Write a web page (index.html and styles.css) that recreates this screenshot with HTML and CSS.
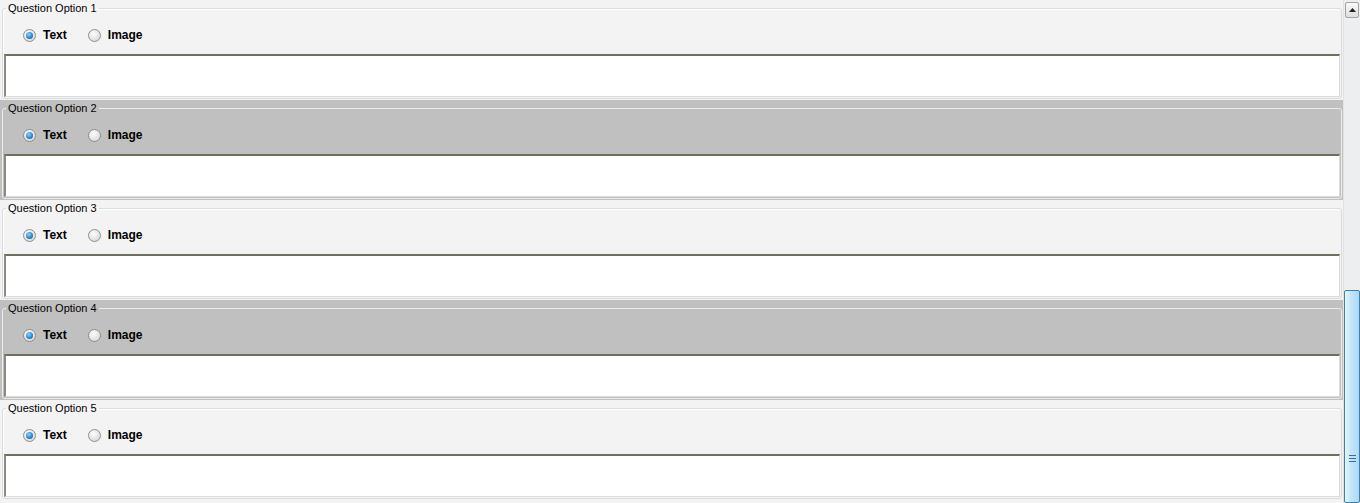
FILE: index.html
```html
<!DOCTYPE html>
<html lang="en">
<head>
<meta charset="UTF-8" />
<title>Question Options</title>
<link rel="stylesheet" href="styles.css">
</head>
<body>
  <div class="window">
    <div class="options">
      <div class="panel">
        <fieldset class="group">
          <legend>Question Option 1</legend>
          <div class="choices">
            <label class="radio"><span class="dot checked"></span>Text</label>
            <label class="radio"><span class="dot"></span>Image</label>
          </div>
          <div class="textbox"></div>
        </fieldset>
      </div>
      <div class="panel alt">
        <fieldset class="group">
          <legend>Question Option 2</legend>
          <div class="choices">
            <label class="radio"><span class="dot checked"></span>Text</label>
            <label class="radio"><span class="dot"></span>Image</label>
          </div>
          <div class="textbox"></div>
        </fieldset>
      </div>
      <div class="panel">
        <fieldset class="group">
          <legend>Question Option 3</legend>
          <div class="choices">
            <label class="radio"><span class="dot checked"></span>Text</label>
            <label class="radio"><span class="dot"></span>Image</label>
          </div>
          <div class="textbox"></div>
        </fieldset>
      </div>
      <div class="panel alt">
        <fieldset class="group">
          <legend>Question Option 4</legend>
          <div class="choices">
            <label class="radio"><span class="dot checked"></span>Text</label>
            <label class="radio"><span class="dot"></span>Image</label>
          </div>
          <div class="textbox"></div>
        </fieldset>
      </div>
      <div class="panel">
        <fieldset class="group">
          <legend>Question Option 5</legend>
          <div class="choices">
            <label class="radio"><span class="dot checked"></span>Text</label>
            <label class="radio"><span class="dot"></span>Image</label>
          </div>
          <div class="textbox"></div>
        </fieldset>
      </div>
    </div>
    <div class="scrollbar">
      <div class="arrow">
        <svg width="7" height="4" viewBox="0 0 7 4"><path d="M0 4 L3.5 0 L7 4 Z" fill="#222"/></svg>
      </div>
      <div class="thumb">
        <span class="grip"></span>
      </div>
    </div>
  </div>
</body>
</html>
```

FILE: styles.css
```css
* {
  box-sizing: border-box;
}
body {
  margin: 0;
  background: #f3f3f3;
  font-family: 'Liberation Sans', Arial, sans-serif;
  font-size: 11px;
  color: #000;
}
.window {
  display: flex;
  height: 503px;
  border-top: 1px solid #b9d1ea;
}
.options {
  flex: 1;
  display: flex;
  flex-direction: column;
  margin-top: -1px;
}
.panel {
  height: 100px;
  padding: 1px 1px 0 2px;
  background: #f3f3f3;
}
.panel.alt {
  background: #c0c0c0;
}
.group {
  margin: 0;
  padding: 0;
  height: 98px;
  border: 1px solid #d9dcde;
  border-radius: 3px;
  box-shadow: inset 1px 1px 0 #fff;
  display: flex;
  flex-direction: column;
}
.alt .group {
  border-color: #ececec;
  box-shadow: none;
}
legend {
  margin-left: 3px;
  padding: 0 2px;
  line-height: 14px;
}
.choices {
  display: flex;
  margin: 13px 0 0 20px;
  height: 14px;
  align-items: center;
}
.radio {
  display: flex;
  align-items: center;
  font-weight: bold;
  font-size: 12px;
  gap: 7px;
}
.radio + .radio {
  margin-left: 21px;
}
.dot {
  width: 13px;
  height: 13px;
  border-radius: 50%;
  border: 1px solid #8f8f8f;
  background: radial-gradient(circle at 40% 35%, #ffffff, #e2e2e2 60%, #cfcfcf);
  display: flex;
  align-items: center;
  justify-content: center;
}
.dot.checked::after {
  content: '';
  width: 7px;
  height: 7px;
  border-radius: 50%;
  background: radial-gradient(circle at 40% 35%, #8fd2ff, #2a8bd0 55%, #1b4f86);
}
.textbox {
  margin: 12px 1px 0 1px;
  height: 43px;
  background: #fff;
  border-style: solid;
  border-width: 2px 1px 1px 2px;
  border-color: #6f6f60 #dcdcdc #dcdcdc #8a8a80;
}
.scrollbar {
  width: 17px;
  position: relative;
  background: #eceeef;
  border-left: 1px solid #e2e2e2;
  margin-top: -1px;
}
.arrow {
  margin: 2px 1px 0 1px;
  height: 16px;
  border: 1px solid #a3a3a3;
  border-radius: 2px;
  background: linear-gradient(#fafafa, #dedede);
  display: flex;
  align-items: center;
  justify-content: center;
}
.thumb {
  position: absolute;
  left: 0;
  right: 0;
  top: 290px;
  bottom: 0;
  border: 1px solid #3c7fb1;
  border-radius: 2px;
  background: linear-gradient(90deg, #e6f5fd, #c3e5f8 45%, #acd9f5);
}
.grip {
  position: absolute;
  left: 4px;
  width: 7px;
  top: 164px;
  height: 7px;
  border-top: 1px solid #3a6f98;
  border-bottom: 1px solid #3a6f98;
}
.grip::after {
  content: '';
  position: absolute;
  left: 0;
  right: 0;
  top: 2px;
  border-top: 1px solid #3a6f98;
}
```
